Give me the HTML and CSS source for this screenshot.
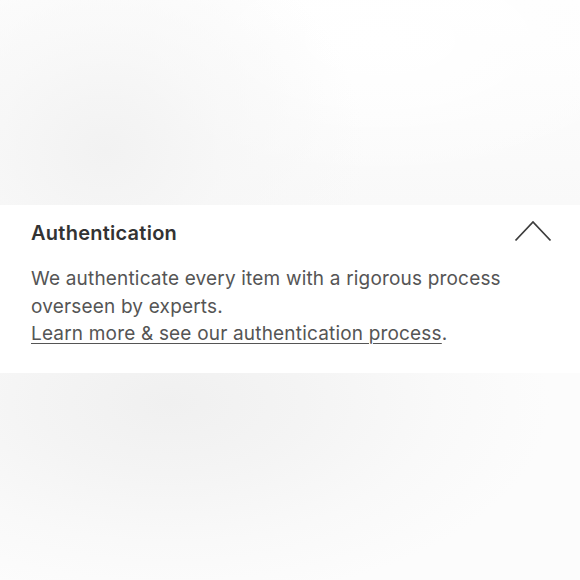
FILE: index.html
```html
<!DOCTYPE html>
<html lang="en">
<head>
<meta charset="utf-8">
<link rel="stylesheet" href="styles.css">
</head>
<body>
<div class="page">
  <div class="backdrop backdrop-top"></div>
  <section class="panel">
    <div class="panel-head">
      <h2 class="panel-title">Authentication</h2>
      <svg class="chevron" width="38" height="22" viewBox="0 0 38 22" aria-hidden="true">
        <polyline points="1.5,20.5 19,2 36.5,20.5" fill="none" stroke="#3d3d3d" stroke-width="1.8"/>
      </svg>
    </div>
    <p class="panel-text">We authenticate every item with a rigorous process overseen by experts.<br><a class="panel-link" href="#">Learn more &amp; see our authentication process</a>.</p>
  </section>
  <div class="backdrop backdrop-bottom"></div>
</div>
</body>
</html>
```
FILE: styles.css
```css
html, body {
  margin: 0;
  padding: 0;
}
body {
  width: 580px;
  height: 580px;
  overflow: hidden;
  font-family: Inter, "Liberation Sans", sans-serif;
  background: #fafafa;
}
.page {
  display: flex;
  flex-direction: column;
  height: 580px;
}
.backdrop-top {
  height: 205px;
  background:
    radial-gradient(ellipse 260px 230px at 105px 150px, #f2f2f2 0%, rgba(246,246,246,0.7) 45%, rgba(255,255,255,0) 100%),
    radial-gradient(ellipse 300px 140px at 380px 40px, #ffffff 0%, rgba(255,255,255,0) 100%),
    linear-gradient(180deg, #fefefe 0%, #f9f9f9 100%);
}
.backdrop-bottom {
  flex: 1;
  background:
    radial-gradient(ellipse 380px 200px at 170px 30px, #f0f0f0 0%, #f4f4f4 35%, #f9f9f9 70%, #fcfcfc 100%);
}
.panel {
  height: 168px;
  box-sizing: border-box;
  background: #ffffff;
  padding: 14px 28px 0 31px;
}
.panel-head {
  display: flex;
  align-items: flex-start;
  justify-content: space-between;
}
.panel-title {
  margin: 0;
  font-size: 20px;
  line-height: 28px;
  font-weight: 600;
  color: #333333;
  letter-spacing: 0.25px;
}
.chevron {
  display: block;
  margin-top: 1px;
}
.panel-text {
  margin: 18px 0 0 0;
  font-size: 19px;
  line-height: 27.5px;
  color: #555555;
  letter-spacing: 0.18px;
}
.panel-link {
  color: #555555;
  text-decoration: underline;
  text-underline-offset: 3px;
  text-decoration-thickness: 1px;
}
```
